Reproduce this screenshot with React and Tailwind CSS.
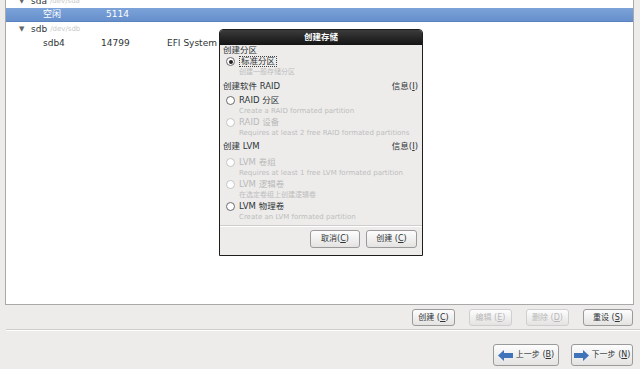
export default function App() {
    const font = { fontFamily: '"DejaVu Sans", "Noto Sans CJK SC", sans-serif' };

    const Radio = ({ checked, disabled }) => (
        <span
            className={`w-[9px] h-[9px] rounded-full border bg-white flex items-center justify-center shrink-0 ${disabled ? 'border-[#c4c4c4]' : 'border-[#6a6a6a]'}`}
        >
            {checked && <span className="w-[4px] h-[4px] rounded-full bg-[#222]" />}
        </span>
    );

    const Option = ({ label, desc, checked, disabled, focus, h = 'h-[11px]', mt = '' }) => (
        <>
            <div className={`${h} ${mt} flex items-center gap-[4px] pl-[3px]`}>
                <Radio checked={checked} disabled={disabled} />
                <span
                    className={`text-[8.5px] leading-none ${disabled ? 'text-[#b9b9b9]' : 'text-[#2e3436]'} ${focus ? 'border border-dotted border-[#444] px-[1px]' : ''}`}
                >
                    {label}
                </span>
            </div>
            <div className="h-[11px] flex items-center pl-[16px] text-[7px] leading-none text-[#bdbdbd]">{desc}</div>
        </>
    );

    const Btn = ({ children, disabled, className = '' }) => (
        <div
            className={`flex items-center justify-center rounded-[3px] border bg-gradient-to-b from-[#fdfdfd] to-[#e4e3e2] text-[8px] leading-none ${disabled ? 'border-[#cfcfcf] text-[#b8b8b8]' : 'border-[#9a9a9a] text-[#2e3436]'} ${className}`}
        >
            {children}
        </div>
    );

    return (
        <div className="w-[640px] h-[369px] bg-[#edeceb] flex flex-col overflow-hidden relative" style={font}>
            {/* partition list */}
            <div className="ml-[5px] mr-[6px] h-[305px] bg-white border-l border-r border-b border-[#a9a9a9] flex flex-col overflow-hidden">
                <div className="mt-[-6px] flex flex-col">
                    <div className="h-[14px] flex items-center text-[9px] leading-none text-[#2e3436]">
                        <span className="w-[25px] pl-[13px] text-[7px] text-[#666]">▼</span>
                        <span>sda</span>
                        <span className="ml-[3px] text-[7px] text-[#c8c8c8]">/dev/sda</span>
                    </div>
                    <div className="h-[14px] flex items-center text-[9px] leading-none text-white bg-gradient-to-b from-[#7ca3d9] to-[#6690cc] border-b border-[#5b84bf]">
                        <span className="w-[37px]" />
                        <span className="w-[63px]">空闲</span>
                        <span>5114</span>
                    </div>
                    <div className="h-[14px] flex items-center text-[9px] leading-none text-[#2e3436]">
                        <span className="w-[25px] pl-[13px] text-[7px] text-[#666]">▼</span>
                        <span>sdb</span>
                        <span className="ml-[3px] text-[7px] text-[#c8c8c8]">/dev/sdb</span>
                    </div>
                    <div className="h-[14px] flex items-center text-[9px] leading-none text-[#2e3436]">
                        <span className="w-[37px]" />
                        <span className="w-[58px]">sdb4</span>
                        <span className="w-[66px]">14799</span>
                        <span>EFI System Partition</span>
                    </div>
                </div>
            </div>

            {/* action buttons */}
            <div className="h-[24px] flex items-center justify-end gap-[14px] pr-[7px] pt-[1px]">
                <Btn className="w-[43px] h-[17px]">创建 (<u>C</u>)</Btn>
                <Btn disabled className="w-[43px] h-[17px]">编辑 (<u>E</u>)</Btn>
                <Btn disabled className="w-[43px] h-[17px]">删除 (<u>D</u>)</Btn>
                <Btn className="w-[50px] h-[17px]">重设 (<u>S</u>)</Btn>
            </div>

            <div className="ml-[6px] h-[2px] border-t border-[#cfcecd] border-b border-b-white" />

            {/* navigation */}
            <div className="flex-1 flex items-center justify-end gap-[12px] pr-[7px] pt-[10px]">
                <Btn className="w-[66px] h-[22px] gap-[3px]">
                    <svg width="15" height="11" viewBox="0 0 15 11">
                        <path d="M0 5.5 L6 0 L6 3 L15 3 L15 8 L6 8 L6 11 Z" fill="#3f74bb" />
                    </svg>
                    <span>上一步 (<u>B</u>)</span>
                </Btn>
                <Btn className="w-[62px] h-[22px] gap-[3px]">
                    <svg width="15" height="11" viewBox="0 0 15 11">
                        <path d="M15 5.5 L9 0 L9 3 L0 3 L0 8 L9 8 L9 11 Z" fill="#3f74bb" />
                    </svg>
                    <span>下一步 (<u>N</u>)</span>
                </Btn>
            </div>

            {/* dialog */}
            <div className="absolute left-[219px] top-[29px] w-[204px] h-[227px] bg-[#edeceb] border border-[#1e1e1e] rounded-t-[4px] flex flex-col overflow-hidden">
                <div className="h-[15px] shrink-0 bg-gradient-to-b from-[#3c3c3c] to-[#141414] flex items-center justify-center text-white text-[8.5px] font-bold leading-none">
                    创建存储
                </div>
                <div className="flex flex-col pl-[3px] pr-[4px]">
                    <div className="h-[11px] flex items-center text-[8.5px] leading-none text-[#2e3436]">创建分区</div>
                    <Option label="标准分区" desc="创建一般存储分区" checked focus h="h-[11px]" />
                    <div className="h-[12px] mt-[2px] flex items-center justify-between text-[8.5px] leading-none text-[#2e3436]">
                        <span>创建软件 RAID</span>
                        <span>信息(<u>I</u>)</span>
                    </div>
                    <Option label="RAID 分区" desc="Create a RAID formated partition" mt="mt-[3px]" />
                    <Option label="RAID 设备" desc="Requires at least 2 free RAID formated partitions" disabled />
                    <div className="h-[12px] mt-[1px] flex items-center justify-between text-[8.5px] leading-none text-[#2e3436]">
                        <span>创建 LVM</span>
                        <span>信息(<u>I</u>)</span>
                    </div>
                    <Option label="LVM 卷组" desc="Requires at least 1 free LVM formated partition" disabled mt="mt-[5px]" />
                    <Option label="LVM 逻辑卷" desc="在选定卷组上创建逻辑卷" disabled />
                    <Option label="LVM 物理卷" desc="Create an LVM formated partition" />
                </div>
                <div className="mt-[2px] h-[2px] border-t border-[#cfcecd] border-b border-b-white" />
                <div className="flex justify-end gap-[6px] pr-[5px] pt-[3px]">
                    <Btn className="w-[50px] h-[18px]">取消(<u>C</u>)</Btn>
                    <Btn className="w-[51px] h-[18px]">创建 (<u>C</u>)</Btn>
                </div>
            </div>
        </div>
    );
}
